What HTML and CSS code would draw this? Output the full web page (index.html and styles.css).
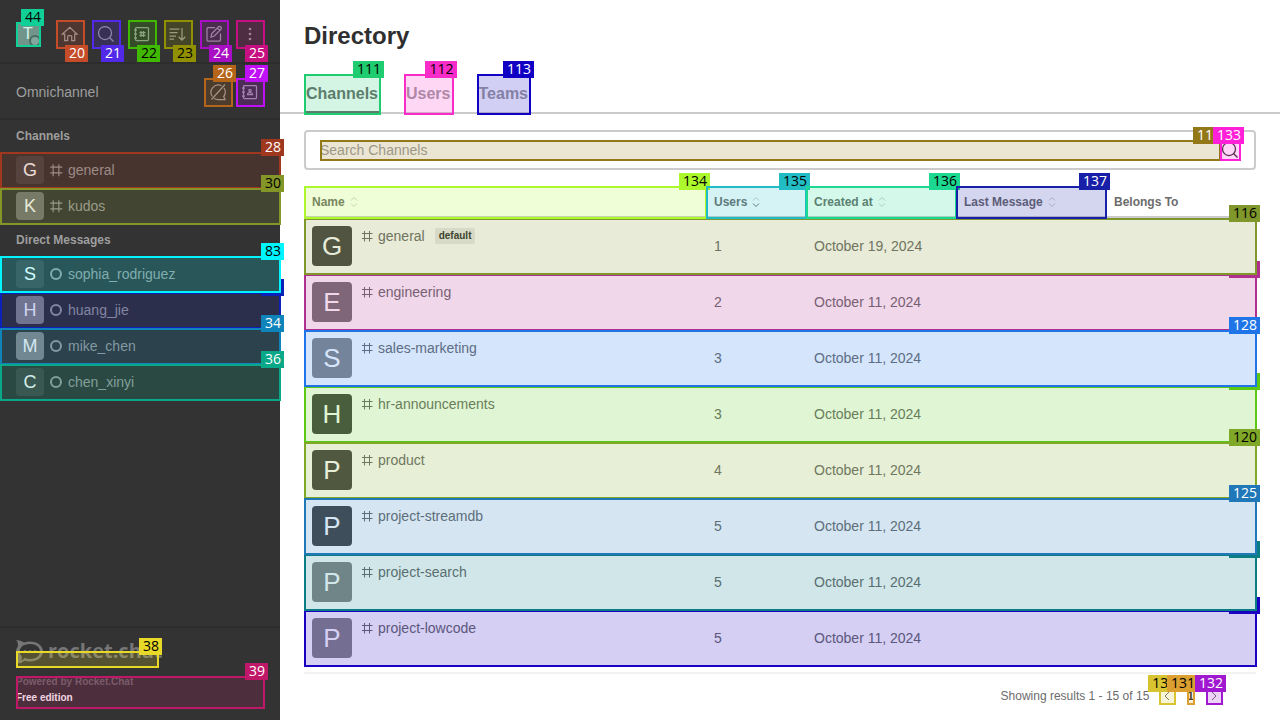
FILE: index.html
```html
<!DOCTYPE html>
<html lang="en">
<head>
<meta charset="utf-8">
<title>Directory</title>
<link rel="stylesheet" href="styles.css">
</head>
<body>
<svg class="defs" aria-hidden="true">
  <symbol id="hash" viewBox="0 0 14 14"><path d="M4.500 2v10.500M9.500 2v10.500M2 4.500h10.500M2 9.500h10.500"/></symbol>
  <symbol id="ring" viewBox="0 0 16 16"><circle cx="8" cy="8" r="5"/></symbol>
  <symbol id="search" viewBox="0 0 20 20"><circle cx="9" cy="9" r="6.500"/><path d="M13.500 13.500l4 4"/></symbol>
  <symbol id="sort" viewBox="0 0 10 12"><path d="M2 4.500l3-3 3 3"/><path class="down" d="M2 7.500l3 3 3-3"/></symbol>
</svg>
<div class="app">
  <aside class="sidebar">
    <div class="topbar">
      <button class="mark me c44 ink" aria-label="User menu">T<i class="status"></i><span class="tag">44</span></button>
      <div class="tools">
        <button class="mark tool low c20" aria-label="Home"><svg class="icon" viewBox="0 0 20 20"><path d="M2.500 10l7.300-6.700 7.200 6.700H14.700v6.700h-3v-4.200q0-1-1-1h-2q-1 0-1 1v4.200h-3V10z"/></svg><span class="tag">20</span></button>
        <button class="mark tool low c21" aria-label="Search"><svg class="icon"><use href="#search"/></svg><span class="tag">21</span></button>
        <button class="mark tool low c22 ink" aria-label="Directory"><svg class="icon" viewBox="0 0 20 20"><rect x="3.500" y="3.500" width="13" height="13" rx="1"/><path d="M2 6h3M2 10h3M2 14h3M9 7v6M11.500 7v6M7.500 8.700h6M7.500 11.300h6"/></svg><span class="tag">22</span></button>
        <button class="mark tool low c23 ink" aria-label="Sort"><svg class="icon" viewBox="0 0 20 20"><path d="M1.500 5h10M1.500 8.500h8M1.500 12h6.500M1.500 15h4.500M14 4v12M10.700 12.700l3.300 3.500 3.300-3.500"/></svg><span class="tag">23</span></button>
        <button class="mark tool low c24" aria-label="Create new"><svg class="icon" viewBox="0 0 20 20"><path d="M11 3.500H4q-1 0-1 1V16q0 1 1 1h11.500q1 0 1-1V9.500M7 13l.8-3.500 7-7q1-.5 2 .5t.5 2l-7 7zM13.300 4l2.500 2.500"/></svg><span class="tag">24</span></button>
        <button class="mark tool low c25" aria-label="More"><svg class="icon dots" viewBox="0 0 20 20"><circle cx="10" cy="5" r="1.300"/><circle cx="10" cy="10" r="1.300"/><circle cx="10" cy="15" r="1.300"/></svg><span class="tag">25</span></button>
      </div>
    </div>
    <div class="omni">
      <span>Omnichannel</span>
      <div class="tools">
        <button class="mark tool c26" aria-label="Livechat availability"><svg class="icon" viewBox="0 0 20 20"><path d="M13.500 3.800A7.300 7.300 0 0 0 4.300 14.500M6 16.500q2 1 4 1h7l-1.300-3A7.300 7.300 0 0 0 16 6M17 2.500L3.500 17.500"/></svg><span class="tag">26</span></button>
        <button class="mark tool c27" aria-label="Contact center"><svg class="icon" viewBox="0 0 20 20"><rect x="3.500" y="3.500" width="13" height="13" rx="1"/><path d="M2 6h3M2 10h3M2 14h3"/><circle cx="10" cy="8.500" r="1.200"/><path d="M7.500 12.500q0-2 2.500-2t2.500 2z"/></svg><span class="tag">27</span></button>
      </div>
    </div>
    <nav class="rooms">
      <h2>Channels</h2>
      <a href="#" class="mark room c28"><b class="avatar">G</b><svg class="kind"><use href="#hash"/></svg>general<span class="tag">28</span></a>
      <a href="#" class="mark room c30 ink"><b class="avatar mid">K</b><svg class="kind"><use href="#hash"/></svg>kudos<span class="tag">30</span></a>
      <h2>Direct Messages</h2>
      <a href="#" class="mark room raised c83 ink"><b class="avatar">S</b><svg class="kind ring"><use href="#ring"/></svg>sophia_rodriguez<span class="tag">83</span></a>
      <a href="#" class="mark room c32"><b class="avatar light">H</b><svg class="kind ring"><use href="#ring"/></svg>huang_jie<span class="tag blank"></span></a>
      <a href="#" class="mark room c34"><b class="avatar light">M</b><svg class="kind ring"><use href="#ring"/></svg>mike_chen<span class="tag">34</span></a>
      <a href="#" class="mark room c36"><b class="avatar">C</b><svg class="kind ring"><use href="#ring"/></svg>chen_xinyi<span class="tag">36</span></a>
    </nav>
    <footer class="foot">
      <a href="#" class="mark brand c38 ink">
        <svg class="logo" viewBox="0 0 28 26"><path fill-rule="evenodd" d="M0 1q5 0 8 2.500Q11 2.500 14 2.500C21 2.500 27 6.500 27 12.500S21 22.500 14 22.500q-3 0-5.500-.8Q5 25 0 24.500q3-3 1.800-7Q0 15 0 12.500t1.800-5Q2.500 3.500 0 1zM5.500 8q-2 2-2 4.500t2 4.500q1 2-.3 4.500Q7 20.500 8.500 19q2.500 1 5.500 1c6 0 10-3 10-7.500S20 5 14 5q-3 0-5.500 1-1.500 0-3 2zM9 11a1.500 1.500 0 1 1 0 3 1.500 1.500 0 0 1 0-3zm5 0a1.500 1.500 0 1 1 0 3 1.500 1.500 0 0 1 0-3zm5 0a1.500 1.500 0 1 1 0 3 1.500 1.500 0 0 1 0-3z"/></svg>
        <span class="wordmark">rocket.chat</span><span class="tag">38</span>
      </a>
      <div class="mark edition c39"><p class="powered">Powered by Rocket.Chat</p><p>Free edition</p><span class="tag">39</span></div>
    </footer>
  </aside>
  <main class="main">
    <h1>Directory</h1>
    <div class="tabs" role="tablist">
      <button class="mark tab active c111 ink" role="tab" aria-selected="true">Channels<span class="tag">111</span></button>
      <button class="mark tab c112 ink" role="tab">Users<span class="tag">112</span></button>
      <button class="mark tab c113" role="tab">Teams<span class="tag">113</span></button>
    </div>
    <div class="content">
      <div class="searchbox">
        <label class="mark field c114"><input type="text" placeholder="Search Channels" aria-label="Search Channels"><span class="tag">114</span></label>
        <button class="mark go c133" aria-label="Search"><svg class="icon"><use href="#search"/></svg><span class="tag">133</span></button>
      </div>
      <table>
        <thead>
          <tr>
            <th class="mark c134 ink">Name<svg class="sort"><use href="#sort"/></svg><span class="tag">134</span></th>
            <th class="mark c135 ink">Users<svg class="sort desc"><use href="#sort"/></svg><span class="tag">135</span></th>
            <th class="mark c136 ink">Created at<svg class="sort"><use href="#sort"/></svg><span class="tag">136</span></th>
            <th class="mark c137">Last Message<svg class="sort"><use href="#sort"/></svg><span class="tag">137</span></th>
            <th>Belongs To</th>
          </tr>
        </thead>
        <tbody>
          <tr class="mark z4 c116 ink"><td class="name"><b class="avatar">G</b><svg class="kind"><use href="#hash"/></svg><span>general</span><em>default</em></td><td>1</td><td>October 19, 2024</td><td></td><td><span class="tag">116</span></td></tr>
          <tr class="mark z1 c117"><td class="name"><b class="avatar mid">E</b><svg class="kind"><use href="#hash"/></svg><span>engineering</span></td><td>2</td><td>October 11, 2024</td><td></td><td><span class="tag blank"></span></td></tr>
          <tr class="mark z4 c128"><td class="name"><b class="avatar light">S</b><svg class="kind"><use href="#hash"/></svg><span>sales-marketing</span></td><td>3</td><td>October 11, 2024</td><td></td><td><span class="tag">128</span></td></tr>
          <tr class="mark z1 c119"><td class="name"><b class="avatar">H</b><svg class="kind"><use href="#hash"/></svg><span>hr-announcements</span></td><td>3</td><td>October 11, 2024</td><td></td><td><span class="tag blank"></span></td></tr>
          <tr class="mark z3 c120 ink"><td class="name"><b class="avatar">P</b><svg class="kind"><use href="#hash"/></svg><span>product</span></td><td>4</td><td>October 11, 2024</td><td></td><td><span class="tag">120</span></td></tr>
          <tr class="mark z4 c125"><td class="name"><b class="avatar">P</b><svg class="kind"><use href="#hash"/></svg><span>project-streamdb</span></td><td>5</td><td>October 11, 2024</td><td></td><td><span class="tag">125</span></td></tr>
          <tr class="mark z3 c122"><td class="name"><b class="avatar light">P</b><svg class="kind"><use href="#hash"/></svg><span>project-search</span></td><td>5</td><td>October 11, 2024</td><td></td><td><span class="tag blank"></span></td></tr>
          <tr class="mark z1 c123"><td class="name"><b class="avatar light">P</b><svg class="kind"><use href="#hash"/></svg><span>project-lowcode</span></td><td>5</td><td>October 11, 2024</td><td></td><td><span class="tag blank"></span></td></tr>
        </tbody>
      </table>
      <div class="pager">
        <span>Showing results 1 - 15 of 15</span>
        <div class="pages">
          <button class="mark step c130 ink" aria-label="Previous page"><svg viewBox="0 0 16 16"><path d="M10 4L6 8l4 4"/></svg><span class="tag">130</span></button>
          <button class="mark page c131 ink">1<span class="tag">131</span></button>
          <button class="mark step c132" aria-label="Next page"><svg viewBox="0 0 16 16"><path d="M6 4l4 4-4 4"/></svg><span class="tag">132</span></button>
        </div>
      </div>
    </div>
  </main>
</div>
</body>
</html>
```
FILE: styles.css
```css
* { box-sizing: border-box; }
body, h1, h2, p { margin: 0; }
body { font: 14px/20px "Liberation Sans", Arial, sans-serif; color: #6c6c6c; background: #fff; }
button { font: inherit; color: inherit; background: none; border: 0; padding: 0; }
a { color: inherit; text-decoration: none; }
svg { fill: none; stroke: currentColor; flex: none; }
.defs { position: absolute; width: 0; height: 0; }
.icon { display: block; width: 20px; height: 20px; stroke-width: 1.25; }
.dots { fill: currentColor; stroke: none; }

/* numbered highlight frames */
.mark { position: relative; }
.mark::after {
  content: ""; position: absolute; inset: 0 -1px -1px 0; z-index: 1; pointer-events: none;
  border: 2px solid var(--c);
  background: color-mix(in srgb, var(--c) 19%, transparent) padding-box;
}
.tag {
  position: absolute; top: -13px; right: -4px; z-index: 2; padding: 0 3px 0 4px; height: 17px;
  font: 14px/15px "Open Sans", sans-serif; color: #fff; background: var(--c);
}
.ink .tag, .ink > .tag { color: #000; }
.blank { width: 31px; }
.room .blank { width: 23px; }
.low .tag { top: 25px; }

.app { display: flex; min-height: 100vh; }
.sidebar { position: relative; z-index: 1; flex: 0 0 280px; display: flex; flex-direction: column; background: #333; color: #9e9e9e; }
.topbar, .omni { display: flex; align-items: center; justify-content: space-between; border-bottom: 2px solid #2d2d2d; }
.topbar { padding: 20px 16px 14px; }
.omni { padding: 14px 16px 12px; }
.tools { display: flex; gap: 8px; }
.omni .tools { gap: 4px; }
.tool { width: 28px; height: 28px; padding: 4px; }
.me { width: 24px; height: 24px; background: #888; color: #fff; font-size: 16px; line-height: 24px; border-radius: 2px; }
.status { position: absolute; right: -1px; bottom: -1px; width: 12px; height: 12px; border: 2px solid #555; border-radius: 50%; background: #9e9e9e; }
.rooms { flex: 1; }
.rooms h2 { font-size: 12px; line-height: 32px; padding: 0 16px; }
.room { z-index: 0; display: flex; align-items: center; height: 36px; padding: 0 16px; background: #333; }
.raised { z-index: 1; }
.avatar { display: block; flex: none; width: 28px; height: 28px; border-radius: 4px; background: #464646; color: #fff; font-weight: 400; font-size: 18px; line-height: 28px; text-align: center; }
.mid { background: #747474; }
.light { background: #888; }
.kind { width: 16px; height: 16px; margin: 0 4px; stroke-width: 1; }
.ring { stroke-width: 2; }

.foot { border-top: 2px solid #2d2d2d; padding: 23px 16px 12px; }
.brand { display: flex; align-items: flex-end; gap: 4px; width: 142px; height: 16px; color: #767676; }
.logo { width: 28px; height: 26px; margin-bottom: 2px; fill: currentColor; stroke: none; }
.wordmark { font: 700 20px/32px "Open Sans", sans-serif; }
.edition { margin-top: 9px; padding-bottom: 4px; display: grid; gap: 4px; font-size: 10px; line-height: 12px; font-weight: 700; color: #fff; }
.powered { color: #6c6c6c; }

.main { flex: 1; min-width: 0; }
h1 { padding: 20px 24px 22px; font-size: 24px; line-height: 32px; color: #2f2f2f; }
.tabs { display: flex; gap: 24px; padding: 0 24px; box-shadow: inset 0 -2px #cbcbcb; }
.tab { height: 40px; padding: 0 2px; font-size: 16px; font-weight: 700; color: #9e9e9e; }
.active { color: #6c6c6c; box-shadow: inset 0 -3px #6c6c6c; }
.content { padding: 16px 24px 0; }
.searchbox { display: flex; padding: 8px 14px; border: 2px solid #cbcbcb; border-radius: 4px; }
.field { flex: 1; height: 20px; }
.field input { display: block; width: 100%; height: 20px; padding: 0; border: 0; background: none; font: inherit; }
.field input::placeholder { color: #9e9e9e; }
.go { color: #2f2f2f; }

table, thead, tbody { display: block; }
table { margin-top: 16px; }
tr { display: grid; grid-template-columns: 1fr 100px 150px 150px 150px; }
th { display: flex; align-items: center; height: 32px; padding: 2px 8px 0; border-bottom: 2px solid #cbcbcb; font-size: 12px; }
th.mark { z-index: 5; }
.sort { width: 10px; height: 12px; margin-left: 4px; color: #cbcbcb; }
th.mark::after { bottom: -3px; }
.down { stroke: var(--down, currentColor); }
.desc { --down: #6c6c6c; }
tbody tr { height: 56px; background: #fff; }
td { padding: 18px 8px; }
.z1 { z-index: 1; }
.z3 { z-index: 3; }
.z4 { z-index: 4; }
.name { display: flex; align-items: flex-start; padding: 8px; }
.name .avatar { width: 40px; height: 40px; font-size: 26px; line-height: 40px; }
.name .kind { width: 14px; height: 14px; margin: 3px 4px 0 8px; }
em { margin: 2px 0 0 10px; padding: 0 4px; border-radius: 2px; background: #ebebeb; color: #2f2f2f; font: 700 10px/16px "Liberation Sans", Arial, sans-serif; }

.pager { display: flex; justify-content: flex-end; align-items: center; gap: 10px; margin-top: 6px; padding: 12px 34px 12px 0; border-top: 2px solid #f2f2f2; font-size: 12px; }
.pages { display: flex; align-items: center; gap: 12px; }
.pages button { height: 16px; line-height: 16px; }
.step { width: 16px; }
.step svg { display: block; width: 16px; height: 16px; }
.page { font-weight: 700; color: #2f2f2f; }

.c44 { --c: #10d098; } .c20 { --c: #c54c29; } .c21 { --c: #5229e8; } .c22 { --c: #41b800; }
.c23 { --c: #909000; } .c24 { --c: #a80fc4; } .c25 { --c: #c60f80; } .c26 { --c: #b5651a; }
.c27 { --c: #c010f8; } .c28 { --c: #a03820; } .c30 { --c: #849628; } .c83 { --c: #00f5ff; }
.c32 { --c: #0a22b8; } .c34 { --c: #0e84ba; } .c36 { --c: #08a888; } .c38 { --c: #e8d828; }
.c39 { --c: #c01868; } .c111 { --c: #20cc70; } .c112 { --c: #f82cc8; } .c113 { --c: #1000c4; }
.c114 { --c: #937818; } .c133 { --c: #ff20d8; } .c134 { --c: #acf82c; } .c135 { --c: #22bcc4; }
.c136 { --c: #1cd890; } .c137 { --c: #1820a8; } .c116 { --c: #7f972b; } .c117 { --c: #b03090; }
.c128 { --c: #1f75e8; } .c119 { --c: #5cc814; } .c120 { --c: #80a828; } .c125 { --c: #2078b8; }
.c122 { --c: #0a7c84; } .c123 { --c: #1a00c0; } .c130 { --c: #d8c430; } .c131 { --c: #dca030; }
.c132 { --c: #a018d0; }
```
